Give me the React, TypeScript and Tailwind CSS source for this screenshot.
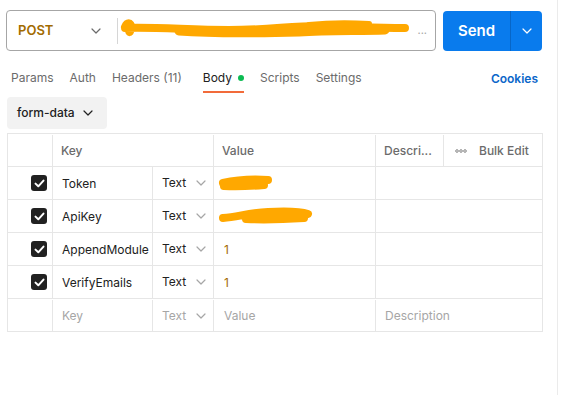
import React from "react"

const Chevron = ({ className = "" }: { className?: string }) => (
    <svg width="10" height="6" viewBox="0 0 10 6" className={className} fill="none">
        <path d="M1 1l4 4 4-4" stroke="currentColor" strokeWidth="1.2" strokeLinecap="round" strokeLinejoin="round"/>
    </svg>
)

const Check = () => (
    <span className="w-[16px] h-[16px] rounded-[3px] bg-[#212121] flex items-center justify-center">
        <svg width="11" height="9" viewBox="0 0 11 9" fill="none">
            <path d="M1.5 4.6l2.8 2.7L9.5 1.6" stroke="white" strokeWidth="2" strokeLinecap="round" strokeLinejoin="round"/>
        </svg>
    </span>
)

const Scribble = ({ w, d }: { w: number; d: string }) => (
    <svg width={w} height="20" viewBox={`0 0 ${w} 20`} fill="none">
        <path d={d} stroke="#ffa800" strokeWidth="8" strokeLinecap="round" strokeLinejoin="round"/>
    </svg>
)

type Row = { key: string; value?: React.ReactNode }

const rows: Row[] = [
    { key: "Token", value: <Scribble w={56} d="M5 9 C18 6 34 5 50 6 M6 12 C20 13 34 12 46 11"/> },
    { key: "ApiKey", value: <Scribble w={96} d="M5 11 C20 10 30 6 50 5 C70 4 84 5 90 7 M28 12 C50 13 70 12 86 11"/> },
    { key: "AppendModule", value: "1" },
    { key: "VerifyEmails", value: "1" },
]

const tabs = ["Params", "Auth", "Headers (11)", "Body", "Scripts", "Settings"]

export default function App() {
    return (
        <div className="w-[564px] h-[395px] bg-white flex text-[12px] text-[#212121]"
             style={{ fontFamily: "Inter, 'Noto Sans', sans-serif" }}>
            <div className="w-[558px] border-r border-[#ebebeb] flex flex-col pl-[6px] pr-[15px] pt-[10px]">
                <div className="flex gap-[7px] items-start">
                    <div className="w-[430px] h-[41px] border border-[#a6a6a6] rounded-[4px] flex items-center">
                        <div className="w-[111px] flex items-center justify-between pl-[11px] pr-[16px]">
                            <span className="font-semibold text-[13px] text-[#a26b00]">POST</span>
                            <Chevron className="text-[#6b6b6b]"/>
                        </div>
                        <div className="w-px h-[26px] bg-[#d6d6d6]"/>
                        <div className="flex-1 flex items-center pl-[2px] pr-[8px] gap-[2px]">
                            <svg width="296" height="26" viewBox="0 0 296 26" fill="none">
                                <path d="M6 9 C8 4 12 4 12 9 C12 14 10 16 10 12 M6 10 C40 9 70 12 110 12 C150 12 170 8 200 8 C230 8 250 10 286 10"
                                      stroke="#ffa800" strokeWidth="8" strokeLinecap="round" strokeLinejoin="round"/>
                                <path d="M60 13 C100 16 140 15 180 14 C210 12 240 13 266 12" stroke="#ffa800" strokeWidth="9" strokeLinecap="round"/>
                                <path d="M190 7 C210 5 230 5 250 6" stroke="#ffa800" strokeWidth="6" strokeLinecap="round"/>
                            </svg>
                            <span className="text-[#a6a6a6] text-[11px] leading-none">...</span>
                        </div>
                    </div>
                    <div className="w-[100px] h-[40px] mt-px rounded-[4px] bg-[#097bed] flex text-white">
                        <div className="w-[67px] flex items-center justify-center font-semibold text-[15px]">Send</div>
                        <div className="w-px bg-[#0766c7]"/>
                        <div className="flex-1 flex items-center justify-center"><Chevron/></div>
                    </div>
                </div>

                <div className="flex items-end h-[42px] leading-[16px]">
                    <div className="flex gap-[16px] pl-[5px]">
                        {tabs.map(t => (
                            <div key={t}
                                 className={`pb-[5px] flex items-center gap-[6px] border-b-2 ${t === "Body" ? "text-[#212121] border-[#f26b3a] ml-[5px]" : "text-[#6b6b6b] border-transparent"}`}>
                                {t}
                                {t === "Body" && <span className="w-[6px] h-[6px] rounded-full bg-[#0cbb52]"/>}
                            </div>
                        ))}
                    </div>
                    <div className="ml-auto pb-[6px] text-[12px] text-[#0b66c9] font-semibold mr-[4px]">Cookies</div>
                </div>

                <div className="mt-[4px] ml-px w-[100px] h-[32px] rounded-[4px] bg-[#f2f2f2] flex items-center justify-between pl-[10px] pr-[14px]">
                    <span className="font-medium">form-data</span>
                    <Chevron className="text-[#212121]"/>
                </div>

                <div className="mt-[4px] ml-px w-[536px] border border-[#e6e6e6]">
                    <div className="flex h-[33px] pt-px border-b border-[#e6e6e6] text-[#6b6b6b] font-medium">
                        <div className="w-[45px] border-r border-[#e6e6e6]"/>
                        <div className="w-[161px] border-r border-[#e6e6e6] flex items-center pl-[8px]">Key</div>
                        <div className="w-[162px] border-r border-[#e6e6e6] flex items-center pl-[8px]">Value</div>
                        <div className="w-[68px] border-r border-[#e6e6e6] flex items-center pl-[8px]">Descri...</div>
                        <div className="flex-1 flex items-center pl-[11px] gap-[12px]">
                            <svg width="12" height="4" viewBox="0 0 12 4" fill="none">
                                <circle cx="2" cy="2" r="1.3" stroke="#6b6b6b" strokeWidth="0.8"/>
                                <circle cx="6" cy="2" r="1.3" stroke="#6b6b6b" strokeWidth="0.8"/>
                                <circle cx="10" cy="2" r="1.3" stroke="#6b6b6b" strokeWidth="0.8"/>
                            </svg>
                            <span>Bulk Edit</span>
                        </div>
                    </div>
                    {rows.map(r => (
                        <div key={r.key} className="flex h-[33px] border-b border-[#e6e6e6]">
                            <div className="w-[45px] border-r border-[#e6e6e6] flex items-center justify-end pr-[5px]"><Check/></div>
                            <div className="w-[100px] border-r border-[#e6e6e6] flex items-center pt-[2px] pl-[9px] whitespace-nowrap">{r.key}</div>
                            <div className="w-[61px] border-r border-[#e6e6e6] flex items-center pl-[9px] gap-[10px] text-[#212121]">
                                Text <Chevron className="text-[#a6a6a6]"/>
                            </div>
                            <div className="w-[162px] border-r border-[#e6e6e6] flex items-center pt-px pl-[4px] text-[#a26b00]">
                                {typeof r.value === "string" ? <span className="pl-[6px]">{r.value}</span> : r.value}
                            </div>
                            <div className="flex-1"/>
                        </div>
                    ))}
                    <div className="flex h-[32px] pt-px text-[#a6a6a6]">
                        <div className="w-[45px] border-r border-[#e6e6e6]"/>
                        <div className="w-[100px] border-r border-[#e6e6e6] flex items-center pl-[9px]">Key</div>
                        <div className="w-[61px] border-r border-[#e6e6e6] flex items-center pl-[9px] gap-[10px]">
                            Text <Chevron className="text-[#a6a6a6]"/>
                        </div>
                        <div className="w-[162px] border-r border-[#e6e6e6] flex items-center pl-[10px]">Value</div>
                        <div className="flex-1 flex items-center pl-[9px]">Description</div>
                    </div>
                </div>
            </div>
        </div>
    )
}
